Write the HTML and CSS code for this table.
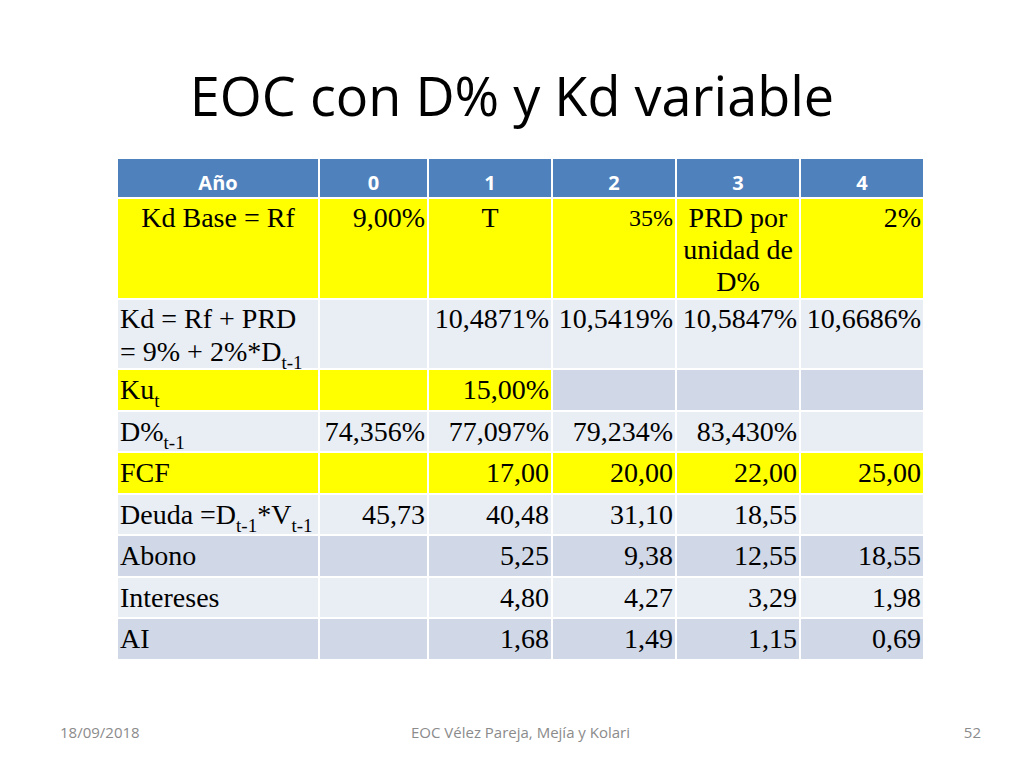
FILE: index.html
```html
<!DOCTYPE html>
<html lang="es">
<head>
<meta charset="utf-8">
<title>EOC con D% y Kd variable</title>
<link rel="stylesheet" href="styles.css">
</head>
<body>
<div class="slide">
  <h1 class="title">EOC con D% y Kd variable</h1>
  <table class="eoc">
    <colgroup>
      <col class="c-label"><col class="c-0"><col class="c-n"><col class="c-n"><col class="c-n"><col class="c-4">
    </colgroup>
    <thead>
      <tr class="r-head">
        <th>Año</th><th>0</th><th>1</th><th>2</th><th>3</th><th>4</th>
      </tr>
    </thead>
    <tbody>
      <tr class="r-params">
        <td class="yl center">Kd Base = Rf</td>
        <td class="yl num">9,00%</td>
        <td class="yl center">T</td>
        <td class="yl num small">35%</td>
        <td class="yl center">PRD por unidad de D%</td>
        <td class="yl num">2%</td>
      </tr>
      <tr class="r-kd">
        <td class="lt">Kd = Rf + PRD = 9% + 2%*D<span class="sub">t-1</span></td>
        <td class="lt"></td>
        <td class="lt num">10,4871%</td>
        <td class="lt num">10,5419%</td>
        <td class="lt num">10,5847%</td>
        <td class="lt num">10,6686%</td>
      </tr>
      <tr class="r-one">
        <td class="yl">Ku<span class="sub">t</span></td>
        <td class="yl"></td>
        <td class="yl num">15,00%</td>
        <td class="dk"></td>
        <td class="dk"></td>
        <td class="dk"></td>
      </tr>
      <tr class="r-one">
        <td class="lt">D%<span class="sub">t-1</span></td>
        <td class="lt num">74,356%</td>
        <td class="lt num">77,097%</td>
        <td class="lt num">79,234%</td>
        <td class="lt num">83,430%</td>
        <td class="lt"></td>
      </tr>
      <tr class="r-one">
        <td class="yl">FCF</td>
        <td class="yl"></td>
        <td class="yl num">17,00</td>
        <td class="yl num">20,00</td>
        <td class="yl num">22,00</td>
        <td class="yl num">25,00</td>
      </tr>
      <tr class="r-one">
        <td class="lt">Deuda =D<span class="sub">t-1</span>*V<span class="sub">t-1</span></td>
        <td class="lt num">45,73</td>
        <td class="lt num">40,48</td>
        <td class="lt num">31,10</td>
        <td class="lt num">18,55</td>
        <td class="lt"></td>
      </tr>
      <tr class="r-one">
        <td class="dk">Abono</td>
        <td class="dk"></td>
        <td class="dk num">5,25</td>
        <td class="dk num">9,38</td>
        <td class="dk num">12,55</td>
        <td class="dk num">18,55</td>
      </tr>
      <tr class="r-one">
        <td class="lt">Intereses</td>
        <td class="lt"></td>
        <td class="lt num">4,80</td>
        <td class="lt num">4,27</td>
        <td class="lt num">3,29</td>
        <td class="lt num">1,98</td>
      </tr>
      <tr class="r-one">
        <td class="dk">AI</td>
        <td class="dk"></td>
        <td class="dk num">1,68</td>
        <td class="dk num">1,49</td>
        <td class="dk num">1,15</td>
        <td class="dk num">0,69</td>
      </tr>
    </tbody>
  </table>
  <div class="footer">
    <div class="f-date">18/09/2018</div>
    <div class="f-center">EOC Vélez Pareja, Mejía y Kolari</div>
    <div class="f-num">52</div>
  </div>
</div>
</body>
</html>
```

FILE: styles.css
```css
html, body {
  margin: 0;
  padding: 0;
  background: #ffffff;
}

.slide {
  width: 1024px;
  height: 768px;
  display: flex;
  flex-direction: column;
  align-items: flex-start;
  background: #ffffff;
  font-family: "Liberation Serif", "Times New Roman", serif;
  color: #000;
}

.title {
  align-self: stretch;
  margin: 68px 0 0 0;
  height: 54px;
  font-family: "Open Sans", "Liberation Sans", sans-serif;
  font-weight: 400;
  font-size: 54px;
  line-height: 54px;
  text-align: center;
  color: #000;
}

.eoc {
  margin: 35px 0 0 116px;
  width: 807px;
  table-layout: fixed;
  border-collapse: collapse;
}

.c-label { width: 202px; }
.c-0 { width: 109px; }
.c-n { width: 124px; }
.c-4 { width: 124px; }

.eoc th,
.eoc td {
  border: 2px solid #ffffff;
  padding: 3px 2px 0 2px;
  vertical-align: top;
  font-size: 28px;
  line-height: 33px;
  text-align: left;
}

.eoc th {
  background: #4f81bd;
  color: #ffffff;
  font-family: "Open Sans", "Liberation Sans", sans-serif;
  font-weight: 700;
  font-size: 20px;
  line-height: 24px;
  text-align: center;
  vertical-align: bottom;
  padding: 0 2px 2px 2px;
}

.r-head { height: 40px; }
.r-params { height: 101px; }
.r-kd { height: 69px; }
.r-one { height: 41.5px; }

.eoc .r-params td { padding-top: 3px; line-height: 32px; }
.eoc .r-kd td { padding-top: 2px; }

.yl { background: #ffff00; }
.lt { background: #e9edf4; }
.dk { background: #d0d8e8; }

.eoc td.num { text-align: right; }
.eoc td.center { text-align: center; }
.eoc td.small { font-size: 24px; }

.sub {
  font-size: 19px;
  line-height: 0;
  vertical-align: -8px;
}

.footer {
  margin-top: auto;
  margin-bottom: 26px;
  align-self: stretch;
  display: flex;
  align-items: baseline;
  padding: 0 43px 0 60px;
  font-family: "Open Sans", "Liberation Sans", sans-serif;
  font-size: 15px;
  color: #8b8b8b;
}

.f-date { flex: 1; text-align: left; }
.f-center { flex: 0 0 auto; text-align: center; }
.f-num { flex: 1; text-align: right; }
```
